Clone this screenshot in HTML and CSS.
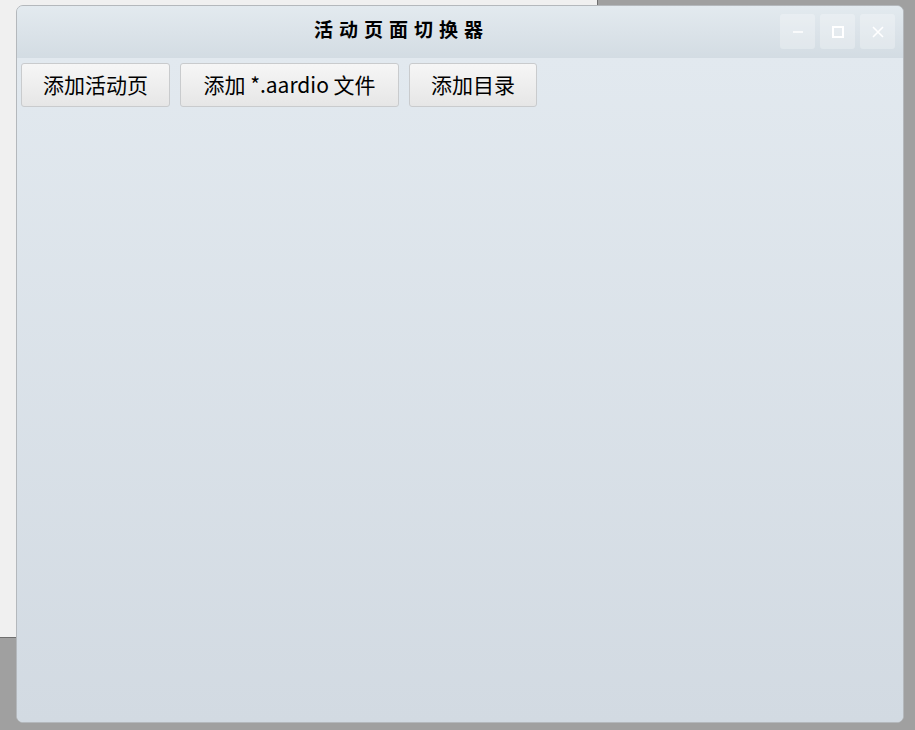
FILE: index.html
```html
<!DOCTYPE html>
<html lang="zh">
<head>
<meta charset="utf-8">
<title>活动页面切换器</title>
<link rel="stylesheet" href="styles.css">
</head>
<body>
<div class="desktop">
  <div class="backwin"></div>
  <div class="window">
    <div class="titlebar">
      <div class="title">活动页面切换器</div>
      <div class="controls">
        <div class="ctl">
          <svg width="12" height="12" viewBox="0 0 12 12"><path d="M1 6h10" stroke="#fff" stroke-width="1.6" fill="none"/></svg>
        </div>
        <div class="ctl">
          <svg width="12" height="12" viewBox="0 0 12 12"><rect x="1" y="1" width="10" height="10" stroke="#fff" stroke-width="2" fill="none"/></svg>
        </div>
        <div class="ctl">
          <svg width="12" height="12" viewBox="0 0 12 12"><path d="M1 1L11 11M11 1L1 11" stroke="#fff" stroke-width="1.6" fill="none"/></svg>
        </div>
      </div>
    </div>
    <div class="content">
      <div class="toolbar">
        <button class="btn b1">添加活动页</button>
        <button class="btn b2">添加 *.aardio 文件</button>
        <button class="btn b3">添加目录</button>
      </div>
    </div>
  </div>
</div>
</body>
</html>
```

FILE: styles.css
```css
html, body {
  margin: 0;
  padding: 0;
  width: 915px;
  height: 730px;
  overflow: hidden;
  background: #a0a0a0;
  font-family: "Noto Sans CJK SC", "Noto Sans", sans-serif;
}
.desktop {
  position: relative;
  width: 915px;
  height: 730px;
}
.backwin {
  position: absolute;
  left: 0;
  top: 0;
  width: 597px;
  height: 637px;
  background: #f0f0f0;
  border-right: 1px solid #6f6f6f;
  border-bottom: 1px solid #6f6f6f;
}
.window {
  position: absolute;
  left: 16px;
  top: 5px;
  width: 886px;
  height: 716px;
  border: 1px solid #b4b8bc;
  border-radius: 7px;
  overflow: hidden;
  display: flex;
  flex-direction: column;
  background: #dde4ea;
}
.titlebar {
  height: 52px;
  flex: none;
  background: linear-gradient(to bottom, #e3eaef, #d3dce3);
  display: flex;
  align-items: flex-start;
  padding: 8px 8px 0 0;
  box-sizing: border-box;
}
.title {
  flex: 1;
  text-align: center;
  font-size: 19px;
  font-weight: bold;
  letter-spacing: 6px;
  text-indent: 6px;
  color: #000;
  line-height: 30px;
  margin-top: 0;
}
.controls {
  display: flex;
  gap: 5px;
}
.ctl {
  width: 35px;
  height: 35px;
  border-radius: 3px;
  background: rgba(255, 255, 255, 0.28);
  display: flex;
  align-items: center;
  justify-content: center;
}
.content {
  flex: 1;
  background: linear-gradient(to bottom, #e2e9ef, #d2dae2);
  padding: 5px 4px;
}
.toolbar {
  display: flex;
  gap: 10px;
}
.btn {
  height: 44px;
  box-sizing: border-box;
  border: 1px solid #c9cbcd;
  border-radius: 3px;
  background: linear-gradient(to bottom, #f6f6f6, #e6e6e6);
  font-family: "Noto Sans CJK SC", "Noto Sans", sans-serif;
  font-size: 21px;
  color: #000;
  padding: 0 0 3px 0;
  line-height: 38px;
}
.b1 { width: 149px; }
.b2 { width: 219px; }
.b3 { width: 128px; }
```
